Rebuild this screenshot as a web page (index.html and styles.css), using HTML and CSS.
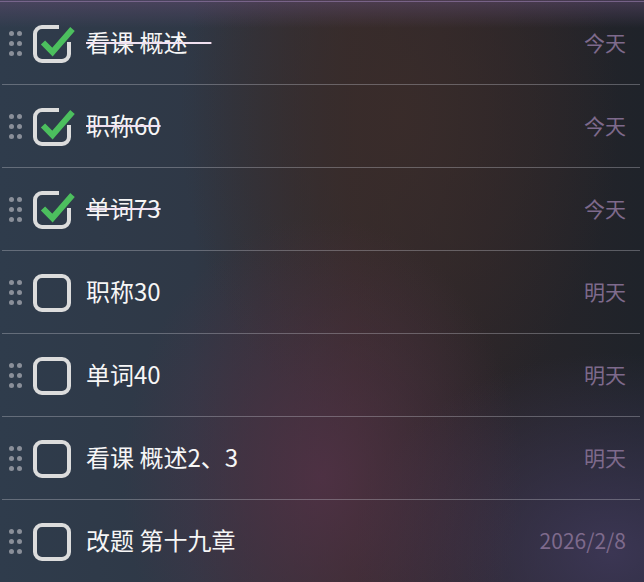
FILE: index.html
```html
<!DOCTYPE html>
<html lang="zh-CN">
<head>
    <meta charset="UTF-8">
    <meta name="viewport" content="width=device-width, initial-scale=1.0">
    <title>待办</title>
    <link rel="stylesheet" href="styles.css">
</head>
<body>

<div id="todo-list">
    <div class="todo-item done">
        <span class="handle"><i></i><i></i><i></i><i></i><i></i><i></i></span>
        <svg class="check" viewBox="0 0 38 38"><path class="box" d="M26 2H9a7 7 0 0 0-7 7v20a7 7 0 0 0 7 7h20a7 7 0 0 0 7-7V17"/><path class="tick" d="M10 17.5L19.5 27L39.5 4"/></svg>
        <span class="title">看课 概述一</span>
        <span class="due">今天</span>
    </div>
    <div class="todo-item done">
        <span class="handle"><i></i><i></i><i></i><i></i><i></i><i></i></span>
        <svg class="check" viewBox="0 0 38 38"><path class="box" d="M26 2H9a7 7 0 0 0-7 7v20a7 7 0 0 0 7 7h20a7 7 0 0 0 7-7V17"/><path class="tick" d="M10 17.5L19.5 27L39.5 4"/></svg>
        <span class="title">职称60</span>
        <span class="due">今天</span>
    </div>
    <div class="todo-item done">
        <span class="handle"><i></i><i></i><i></i><i></i><i></i><i></i></span>
        <svg class="check" viewBox="0 0 38 38"><path class="box" d="M26 2H9a7 7 0 0 0-7 7v20a7 7 0 0 0 7 7h20a7 7 0 0 0 7-7V17"/><path class="tick" d="M10 17.5L19.5 27L39.5 4"/></svg>
        <span class="title">单词73</span>
        <span class="due">今天</span>
    </div>
    <div class="todo-item">
        <span class="handle"><i></i><i></i><i></i><i></i><i></i><i></i></span>
        <svg class="check" viewBox="0 0 38 38"><rect class="box" x="2" y="2" width="34" height="34" rx="7"/></svg>
        <span class="title">职称30</span>
        <span class="due">明天</span>
    </div>
    <div class="todo-item">
        <span class="handle"><i></i><i></i><i></i><i></i><i></i><i></i></span>
        <svg class="check" viewBox="0 0 38 38"><rect class="box" x="2" y="2" width="34" height="34" rx="7"/></svg>
        <span class="title">单词40</span>
        <span class="due">明天</span>
    </div>
    <div class="todo-item">
        <span class="handle"><i></i><i></i><i></i><i></i><i></i><i></i></span>
        <svg class="check" viewBox="0 0 38 38"><rect class="box" x="2" y="2" width="34" height="34" rx="7"/></svg>
        <span class="title">看课 概述2、3</span>
        <span class="due">明天</span>
    </div>
    <div class="todo-item">
        <span class="handle"><i></i><i></i><i></i><i></i><i></i><i></i></span>
        <svg class="check" viewBox="0 0 38 38"><rect class="box" x="2" y="2" width="34" height="34" rx="7"/></svg>
        <span class="title">改题 第十九章</span>
        <span class="due">2026/2/8</span>
    </div>
</div>

</body>
</html>
```

FILE: styles.css
```css
/* Page and background */
body {
    margin: 0;
    padding: 0;
    height: 582px;
    overflow: hidden;
    font-family: 'Noto Sans CJK SC', 'Noto Sans', sans-serif;
    background:
        linear-gradient(to bottom, rgba(95, 75, 110, 0.55) 0, rgba(95, 75, 110, 0) 28px),
        radial-gradient(ellipse 200px 260px at 50% 82%, rgba(84, 50, 72, 0.8), rgba(84, 50, 72, 0)),
        radial-gradient(ellipse 220px 320px at 62% 20%, rgba(58, 44, 42, 0.9), rgba(58, 44, 42, 0)),
        radial-gradient(ellipse 260px 200px at 95% 95%, rgba(62, 56, 88, 0.9), rgba(62, 56, 88, 0)),
        linear-gradient(to right, #2f3c4c 0%, #2f3846 30%, #342b2c 55%, #2a2529 75%, #1f232a 100%);
}

/* List */
#todo-list {
    border-top: 1px solid rgba(140, 115, 160, 0.7);
    margin-top: 1px;
}

.todo-item {
    display: flex;
    align-items: center;
    height: 82px;
    margin: 0 4px 0 2px;
    border-bottom: 1px solid rgba(200, 200, 210, 0.35);
}

/* Drag handle */
.handle {
    display: grid;
    grid-template-columns: 5px 5px;
    gap: 5px 3px;
    margin-left: 7px;
    margin-top: 1px;
}

.handle i {
    width: 5px;
    height: 5px;
    border-radius: 50%;
    background-color: #8a8f99;
}

/* Checkbox */
.check {
    width: 38px;
    height: 38px;
    margin-left: 11px;
    margin-top: 2px;
    overflow: visible;
}

.check .box {
    fill: none;
    stroke: #dcdcdc;
    stroke-width: 4;
}

.check .tick {
    fill: none;
    stroke: #4cbf5e;
    stroke-width: 6;
}

/* Texts */
.title {
    flex: 1;
    margin-left: 15px;
    margin-bottom: 4px;
    font-size: 24px;
    color: #f6f6f6;
    white-space: nowrap;
}

.done .title {
    text-decoration: line-through;
    text-decoration-color: #f0e0f0;
    text-decoration-thickness: 2px;
}

.due {
    margin-right: 14px;
    margin-bottom: 2px;
    font-size: 21px;
    color: #7e6a8c;
}
```
